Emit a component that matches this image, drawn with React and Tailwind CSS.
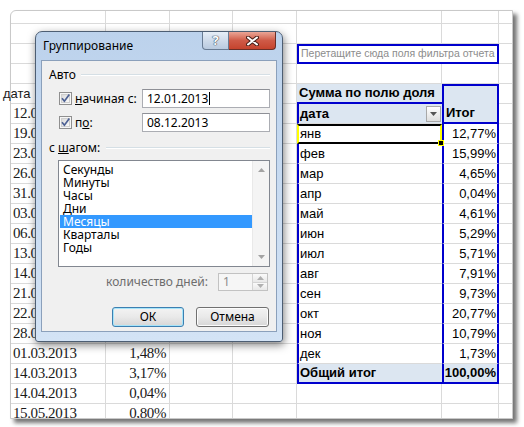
import React from 'react'

const GRID = 'border-r border-b border-[#dadada]'

const leftRows = {
  3: ['дата', ''],
  4: ['12.01.2013', '2,15%'],
  5: ['19.01.2013', '4,37%'],
  6: ['23.01.2013', '3,02%'],
  7: ['26.01.2013', '1,88%'],
  8: ['31.01.2013', '1,35%'],
  9: ['03.02.2013', '5,12%'],
  10: ['06.02.2013', '2,64%'],
  11: ['13.02.2013', '3,41%'],
  12: ['14.02.2013', '1,97%'],
  13: ['21.02.2013', '0,86%'],
  14: ['22.02.2013', '1,05%'],
  15: ['28.02.2013', '0,94%'],
  16: ['01.03.2013', '1,48%'],
  17: ['14.03.2013', '3,17%'],
  18: ['14.04.2013', '0,04%'],
  19: ['15.05.2013', '0,80%'],
}

const months = [
  ['янв', '12,77%'],
  ['фев', '15,99%'],
  ['мар', '4,65%'],
  ['апр', '0,04%'],
  ['май', '4,61%'],
  ['июн', '5,29%'],
  ['июл', '5,71%'],
  ['авг', '7,91%'],
  ['сен', '9,73%'],
  ['окт', '20,77%'],
  ['ноя', '10,79%'],
  ['дек', '1,73%'],
]

const units = ['Секунды', 'Минуты', 'Часы', 'Дни', 'Месяцы', 'Кварталы', 'Годы']

function Cell({ w, h = 'h-full', b = GRID, className = '', children }) {
  return (
    <div className={`${w} ${h} ${b} relative shrink-0 flex items-center whitespace-nowrap ${className}`}>
      {children}
    </div>
  )
}

function LeftCells({ i, h }) {
  const row = leftRows[i]
  const isHead = i === 3
  return (
    <>
      <Cell w="w-[95px]" h={h} className="font-['Liberation_Serif',serif] text-[15px] tracking-[-0.4px] text-[#1a1a1a]">
        {row && isHead && (
          <span className="-ml-[8px] font-['Liberation_Sans',sans-serif] text-[13px] tracking-normal">{row[0]}</span>
        )}
        {row && !isHead && <span className="pl-[2px]">{row[0]}</span>}
      </Cell>
      <Cell w="w-[64px]" h={h} className="justify-end pr-[3px] font-['Liberation_Serif',serif] text-[15px] tracking-[-0.4px] text-[#1a1a1a]">
        {row && row[1]}
      </Cell>
      <Cell w="w-[63px]" h={h} />
      <Cell w="w-[64px]" h={h} />
    </>
  )
}

function PivotCells({ i, h }) {
  if (i === 1) {
    return (
      <Cell
        w="w-[202px]"
        b="border-2 border-[#0000cd]"
        className="pl-[2px] font-['Liberation_Sans',sans-serif] text-[10.5px] text-[#8c8c8c]"
      >
        Перетащите сюда поля фильтра отчета
      </Cell>
    )
  }
  if (i === 3) {
    return (
      <>
        <Cell w="w-[145px]" b="border-b-2 border-b-[#0000cd]" className="bg-[#dce6f1] pl-[2px] font-bold">
          Сумма по полю доля
        </Cell>
        <Cell w="w-[57px]" b="border-x-2 border-t-2 border-[#0000cd]" className="bg-[#dce6f1]" />
      </>
    )
  }
  if (i === 4) {
    return (
      <>
        <Cell w="w-[145px]" b="border-l-2 border-l-[#0000cd] border-b border-b-[#dadada]" className="bg-[#dce6f1] pl-[1px] font-bold">
          дата
          <span className="ml-auto mr-[1px] flex h-[16px] w-[15px] items-center justify-center border border-[#a8a8a8] bg-gradient-to-b from-white to-[#dedede]">
            <svg width="7" height="4" viewBox="0 0 7 4">
              <path d="M0 0 L7 0 L3.5 4 Z" fill="#555" />
            </svg>
          </span>
        </Cell>
        <Cell w="w-[57px]" b="border-x-2 border-b-2 border-[#0000cd]" className="bg-[#dce6f1] pl-[2px] font-bold">
          Итог
        </Cell>
      </>
    )
  }
  if (i >= 5 && i <= 16) {
    const [m, v] = months[i - 5]
    const selected = i === 5
    return (
      <>
        <Cell
          w="w-[145px]"
          b={
            selected
              ? 'border-y-2 border-y-black border-x-2 border-x-[#ffff00]'
              : 'border-l-2 border-l-[#0000cd] border-b border-b-[#dadada]'
          }
          className="pl-[1px]"
        >
          {m}
          {selected && (
            <span className="absolute -bottom-[4px] -right-[4px] z-10 h-[6px] w-[6px] border border-[#ffff00] bg-black" />
          )}
        </Cell>
        <Cell w="w-[57px]" b="border-x-2 border-x-[#0000cd] border-b border-b-[#dadada]" className="justify-end pr-[1px]">
          {v}
        </Cell>
      </>
    )
  }
  if (i === 17) {
    return (
      <>
        <Cell w="w-[145px]" b="border-l-2 border-b-2 border-[#0000cd]" className="bg-[#dce6f1] pl-[1px] font-bold">
          Общий итог
        </Cell>
        <Cell w="w-[57px]" b="border-x-2 border-b-2 border-[#0000cd]" className="bg-[#dce6f1] justify-end pr-[1px] font-bold">
          100,00%
        </Cell>
      </>
    )
  }
  return (
    <>
      <Cell w="w-[145px]" h={h} />
      <Cell w="w-[57px]" h={h} />
    </>
  )
}

function Sheet() {
  const rows = Array.from({ length: 20 }, (_, i) => i)
  return (
    <div className="ml-[10px] mt-[10px] h-[409px] w-[503px] rounded-tl-[6px] border border-[#c9c9c9] bg-white shadow-[4px_4px_4px_rgba(0,0,0,0.55)] font-['Liberation_Sans',sans-serif] text-[13px] text-black">
      <div className="flex h-[13px]">
        <Cell w="w-[95px]" />
        <Cell w="w-[64px]" />
        <Cell w="w-[63px]" />
        <Cell w="w-[64px]" />
        <Cell w="w-[145px]" />
        <Cell w="w-[57px]" />
        <Cell w="w-[13px]" b="border-b border-[#dadada]" />
      </div>
      {rows.map((i) => {
        const last = i === 19
        const h = last ? 'h-[20px]' : 'h-full'
        return (
          <div key={i} className={`flex ${last ? 'h-[14px] overflow-hidden items-start' : 'h-[20px]'}`}>
            <LeftCells i={i} h={h} />
            <PivotCells i={i} h={h} />
            <Cell w="w-[13px]" h={h} b={last ? '' : 'border-b border-[#dadada]'} />
          </div>
        )
      })}
    </div>
  )
}

function CheckBox() {
  return (
    <svg width="13" height="13" viewBox="0 0 13 13" className="shrink-0">
      <defs>
        <linearGradient id="cbg" x1="0" y1="0" x2="1" y2="1">
          <stop offset="0" stopColor="#d9d9d9" />
          <stop offset="1" stopColor="#fbfbfb" />
        </linearGradient>
      </defs>
      <rect x="0.5" y="0.5" width="12" height="12" fill="#f6f6f6" stroke="#8f8f8f" />
      <rect x="2.5" y="2.5" width="8" height="8" fill="url(#cbg)" stroke="#cfcfcf" />
      <path d="M3 6.2 L5.4 9.2 L10.3 2.6" fill="none" stroke="#4c6093" strokeWidth="1.7" />
    </svg>
  )
}

function Arrow({ up, color = '#a3a3a3' }) {
  return (
    <svg width="7" height="4" viewBox="0 0 7 4">
      <path d={up ? 'M0 4 L7 4 L3.5 0 Z' : 'M0 0 L7 0 L3.5 4 Z'} fill={color} />
    </svg>
  )
}

function WinButton({ children, focused }) {
  return (
    <div
      className={`flex h-[20px] items-center justify-center rounded-[3px] border bg-gradient-to-b from-[#f3f3f3] via-[#e9e9e9] to-[#d6d6d6] ${
        focused ? 'w-[72px] border-[#3c7fb1] shadow-[inset_0_0_0_1px_#a6e4f9]' : 'w-[73px] border-[#707070] shadow-[inset_0_0_0_1px_#fcfcfc]'
      }`}
    >
      {children}
    </div>
  )
}

function Dialog() {
  return (
    <div className="absolute left-[35px] top-[31px] flex h-[311px] w-[248px] flex-col rounded-t-[7px] rounded-b-[3px] border border-[#4d5e73] bg-gradient-to-b from-[#bcd2ec] via-[#c8dbf1] to-[#d3e3f5] px-[5px] pb-[9px] shadow-[1px_3px_9px_rgba(0,0,0,0.5)] font-['Noto_Sans',sans-serif] text-[12px] text-black">
      <div className="relative flex h-[28px] shrink-0 items-center pl-[2px] pb-[1px]">
        <span>Группирование</span>
        <div className="absolute right-[1px] top-0 flex">
          <div className="flex h-[18px] w-[27px] items-center justify-center rounded-bl-[4px] border border-t-0 border-[#687b93] bg-gradient-to-b from-[#e6eef7] via-[#cfdbea] to-[#b9cadf] text-[13px] font-bold text-white [text-shadow:0_0_1px_#3b4a5c,0_0_1px_#3b4a5c,0_0_1px_#3b4a5c]">
            ?
          </div>
          <div className="flex h-[18px] w-[47px] items-center justify-center rounded-br-[4px] border border-l-0 border-t-0 border-[#6a2e27] bg-gradient-to-b from-[#e9a596] via-[#cf5a47] to-[#c5432d]">
            <svg width="13" height="10" viewBox="0 0 13 10">
              <path d="M2 1.5 L11 8.5 M11 1.5 L2 8.5" stroke="#4a2019" strokeWidth="4" strokeLinecap="round" />
              <path d="M2 1.5 L11 8.5 M11 1.5 L2 8.5" stroke="#ffffff" strokeWidth="2" strokeLinecap="round" />
            </svg>
          </div>
        </div>
      </div>

      <div className="flex flex-1 flex-col border border-[#8ba0bb] bg-[#f0f0f0]">
        <div className="mt-[7px] flex h-[14px] items-center">
          <span className="ml-[7px]">Авто</span>
          <span className="ml-[5px] mr-[6px] h-[2px] flex-1 border-t border-b border-t-[#d5dfe5] border-b-white" />
        </div>

        <div className="mt-[7px] flex h-[19px] items-center">
          <span className="ml-[17px]"><CheckBox /></span>
          <span className="ml-[3px] w-[67px]">
            <span className="underline">н</span>ачиная с:
          </span>
          <div className="flex h-[19px] w-[128px] items-center border border-[#abadb3] border-t-[#8e9096] bg-white pl-[4px]">
            12.01.2013
            <span className="ml-[1px] h-[13px] w-[1px] bg-black" />
          </div>
        </div>

        <div className="mt-[5px] flex h-[19px] items-center">
          <span className="ml-[17px]"><CheckBox /></span>
          <span className="ml-[3px] w-[67px]">
            п<span className="underline">о</span>:
          </span>
          <div className="flex h-[19px] w-[128px] items-center border border-[#abadb3] border-t-[#8e9096] bg-white pl-[4px]">
            08.12.2013
          </div>
        </div>

        <div className="mt-[9px] flex h-[14px] items-center">
          <span className="ml-[7px]">
            с <span className="underline">ш</span>агом:
          </span>
          <span className="ml-[6px] mr-[6px] h-[2px] flex-1 border-t border-b border-t-[#d5dfe5] border-b-white" />
        </div>

        <div className="ml-[16px] mt-[5px] flex h-[107px] w-[212px] border border-[#828790] bg-white">
          <div className="flex-1 pl-[1px] pt-[2px]">
            {units.map((u) => (
              <div key={u} className={`h-[13px] pl-[3px] leading-[13px] ${u === 'Месяцы' ? 'bg-[#3399ff] text-white' : ''}`}>
                {u}
              </div>
            ))}
          </div>
          <div className="flex w-[17px] flex-col items-center justify-between border-l border-[#e9e9e9] bg-[#f4f4f4] pb-[7px] pt-[7px]">
            <Arrow up />
            <Arrow />
          </div>
        </div>

        <div className="mt-[6px] flex h-[18px] items-center justify-end pr-[8px]">
          <span className="mr-[10px] text-[#6d6d6d]">количество дней:</span>
          <div className="flex h-[18px] w-[50px] items-center border border-[#c2c2c2] bg-[#f6f6f6] pl-[4px] text-[#8c8c8c]">
            <span className="flex-1">1</span>
            <div className="flex h-full w-[15px] flex-col border-l border-[#d4d4d4]">
              <div className="flex flex-1 items-center justify-center border-b border-[#d4d4d4] bg-gradient-to-b from-[#fafafa] to-[#e8e8e8]">
                <Arrow up color="#b0b0b0" />
              </div>
              <div className="flex flex-1 items-center justify-center bg-gradient-to-b from-[#fafafa] to-[#e8e8e8]">
                <Arrow color="#b0b0b0" />
              </div>
            </div>
          </div>
        </div>

        <div className="mt-[16px] flex gap-[12px] pl-[70px]">
          <WinButton focused>ОК</WinButton>
          <WinButton>Отмена</WinButton>
        </div>
      </div>
    </div>
  )
}

export default function App() {
  return (
    <div className="relative h-[427px] w-[524px] overflow-hidden bg-white">
      <Sheet />
      <Dialog />
    </div>
  )
}
